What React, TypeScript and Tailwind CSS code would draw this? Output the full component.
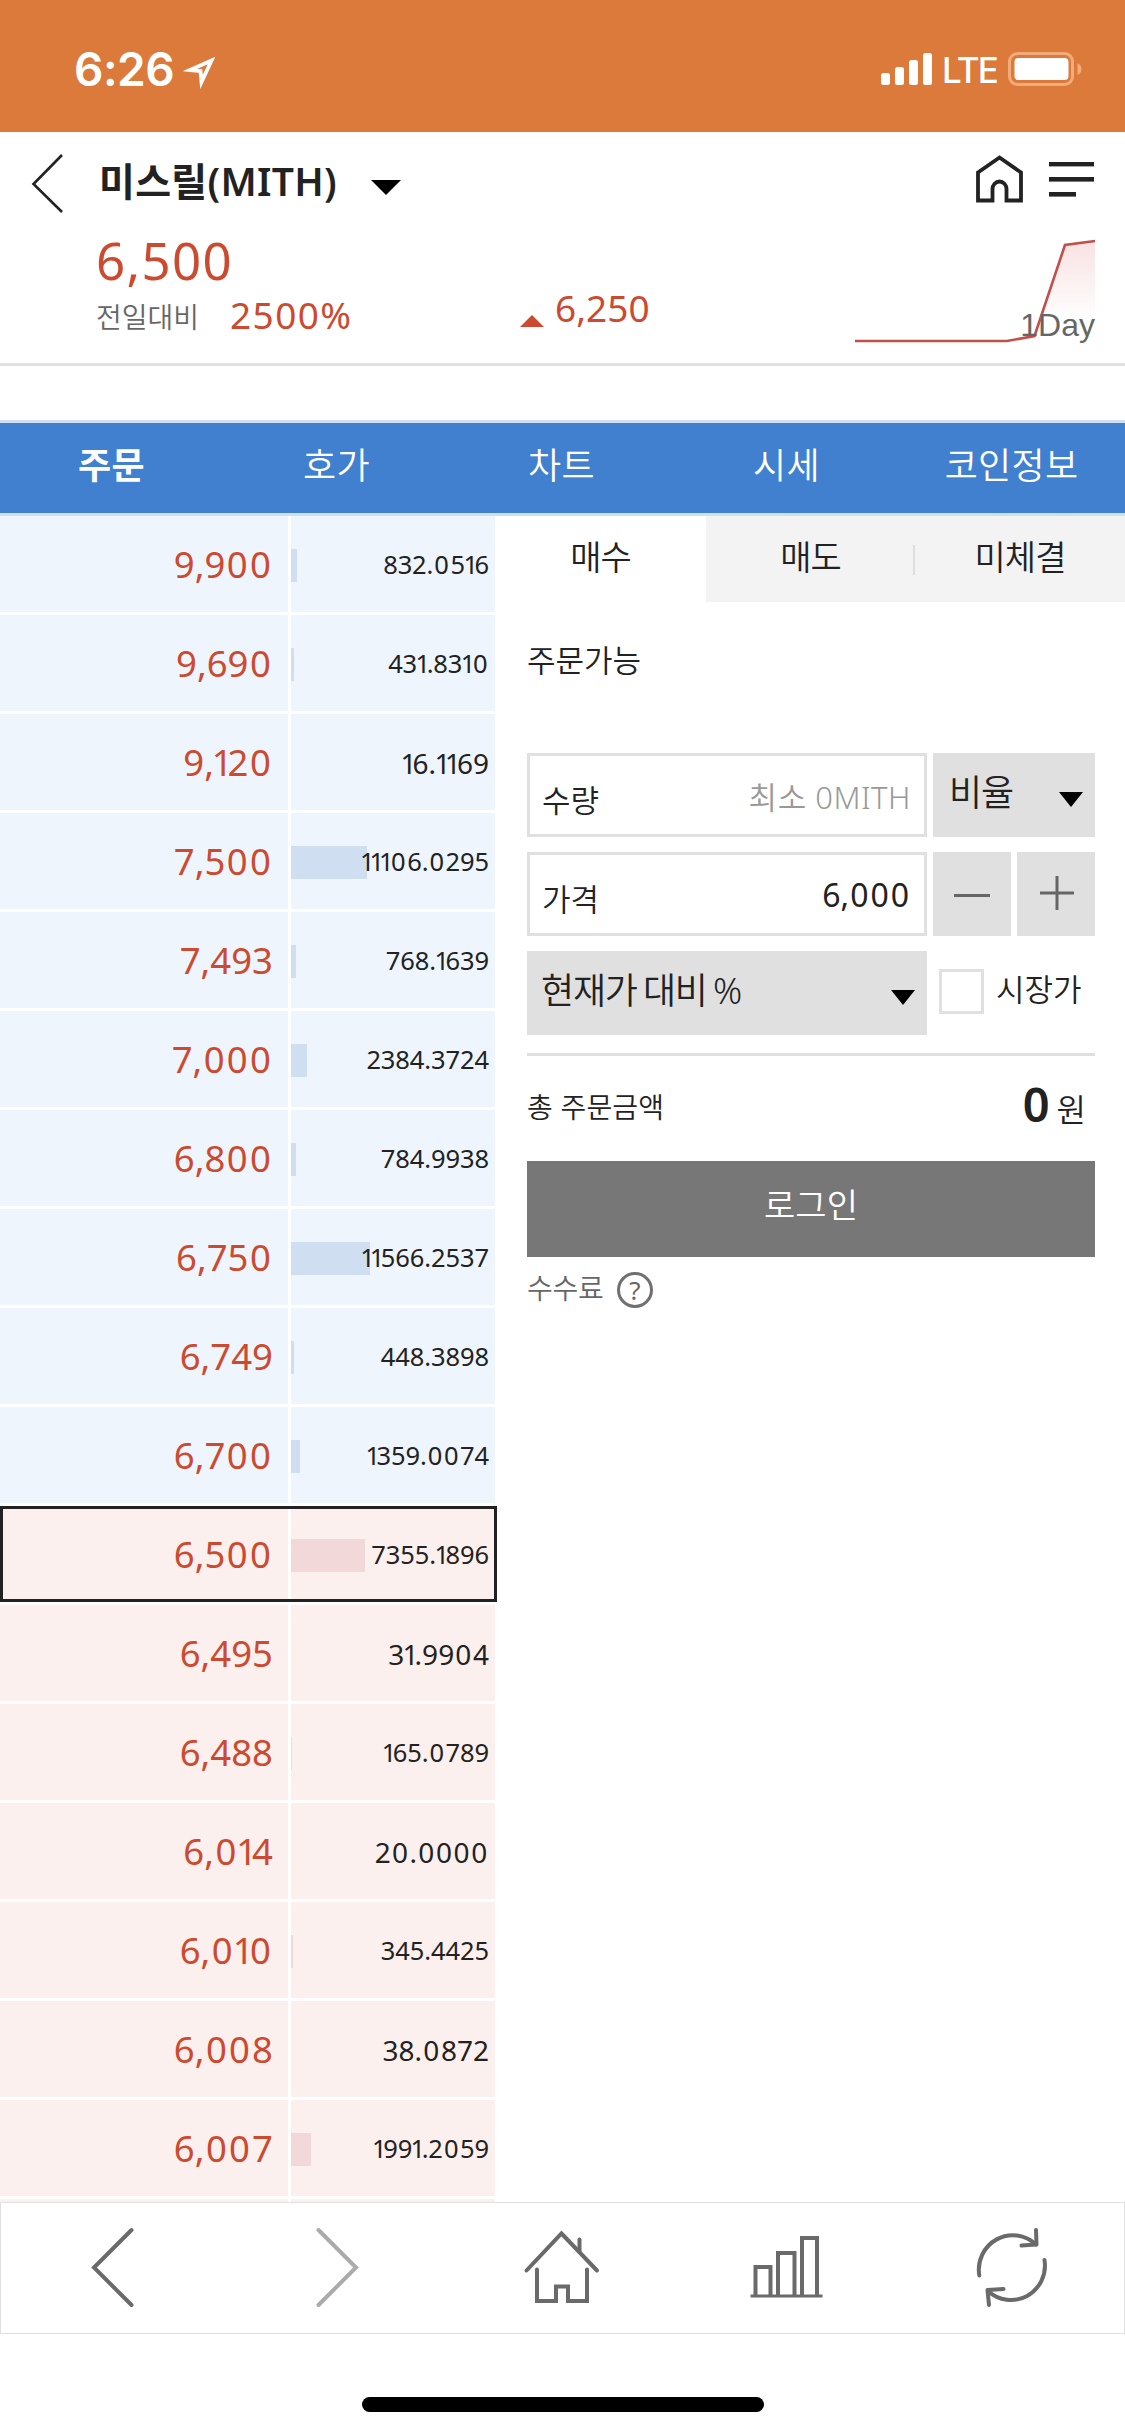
import type { ReactNode } from "react";
import clsx from "clsx";

interface OrderRow {
  price: string;
  amount: string;
  bar: number;
  side: "ask" | "bid";
  current?: boolean;
}

const ORDERS: OrderRow[] = [
  { price: "9,900", amount: "832.0516", bar: 6, side: "ask" },
  { price: "9,690", amount: "431.8310", bar: 3, side: "ask" },
  { price: "9,120", amount: "16.1169", bar: 0, side: "ask" },
  { price: "7,500", amount: "11106.0295", bar: 76, side: "ask" },
  { price: "7,493", amount: "768.1639", bar: 5, side: "ask" },
  { price: "7,000", amount: "2384.3724", bar: 16, side: "ask" },
  { price: "6,800", amount: "784.9938", bar: 5, side: "ask" },
  { price: "6,750", amount: "11566.2537", bar: 79, side: "ask" },
  { price: "6,749", amount: "448.3898", bar: 3, side: "ask" },
  { price: "6,700", amount: "1359.0074", bar: 9, side: "ask" },
  { price: "6,500", amount: "7355.1896", bar: 74, side: "bid", current: true },
  { price: "6,495", amount: "31.9904", bar: 0, side: "bid" },
  { price: "6,488", amount: "165.0789", bar: 1, side: "bid" },
  { price: "6,014", amount: "20.0000", bar: 0, side: "bid" },
  { price: "6,010", amount: "345.4425", bar: 2, side: "bid" },
  { price: "6,008", amount: "38.0872", bar: 0, side: "bid" },
  { price: "6,007", amount: "1991.2059", bar: 20, side: "bid" },
];

const NAV = ["주문", "호가", "차트", "시세", "코인정보"];

// proportional figures: narrow 1, slightly wide 0
function Figures({ value }: { value: string }) {
  return (
    <>
      {value.split(/(1|0+)/).map((part, i) => {
        if (part === "1") {
          return (
            <span key={i} className="-ml-[0.06em] tracking-[-0.14em]">
              1
            </span>
          );
        }
        if (part.startsWith("0")) {
          return (
            <span key={i} className="ml-[0.04em] tracking-[0.06em]">
              {part}
            </span>
          );
        }
        return part;
      })}
    </>
  );
}

function StatusBar() {
  return (
    <div className="flex h-[132px] items-start bg-[#db7a3a] pr-[43px] pl-[74px] text-white">
      <span className="mt-[46px] w-[108px] font-['Inter'] text-[46px] leading-[46px] font-semibold tracking-[-0.5px]">
        6:26
      </span>
      <svg className="mt-[55px] ml-[1px]" width="34" height="34" viewBox="0 0 34 34">
        <path d="M28.500 5.500 L7 15 L17.500 16 L18.500 27 Z" fill="none" stroke="#fff" strokeWidth="3.800" />
      </svg>
      <svg className="mt-[52px] ml-auto" width="52" height="34" viewBox="0 0 52 34" fill="#fff">
        <rect x="0" y="21" width="9" height="12" rx="2.5" />
        <rect x="14" y="15" width="9" height="18" rx="2.5" />
        <rect x="28" y="8" width="9" height="25" rx="2.5" />
        <rect x="42" y="1" width="9" height="32" rx="2.5" />
      </svg>
      <span className="mt-[52px] ml-[9px] w-[64px] font-['Inter'] text-[35px] leading-[36px] font-medium tracking-[-1.8px]">
        LTE
      </span>
      <svg className="mt-[51px] ml-[1px]" width="75" height="36" viewBox="0 0 75 36">
        <rect x="2.5" y="2.5" width="63" height="31" rx="8" fill="none" stroke="#f3ab79" strokeWidth="3" />
        <rect x="7.5" y="7" width="54" height="22" rx="4" fill="#fff" />
        <path d="M70.500 12 Q74.500 14 74.500 18 Q74.500 22 70.500 24 Z" fill="#f3ab79" />
      </svg>
    </div>
  );
}

function CoinHeader() {
  return (
    <header className="flex h-[234px] flex-col border-b-[3px] border-[#e0e0e0] bg-white">
      <div className="flex h-[102px] items-center pr-[31px] pl-[31px]">
        <svg width="34" height="60" viewBox="0 0 34 60" fill="none" stroke="#222" strokeWidth="2.6">
          <path d="M31 2 L2.500 31 L31 59" />
        </svg>
        <h1 className="-mt-[4px] ml-[34px] w-[240px] text-[39px] leading-[48px] font-semibold tracking-[0.3px] whitespace-nowrap text-[#222]">
          미스릴(MITH)
        </h1>
        <svg className="mt-[8px] ml-[32px]" width="30" height="15" viewBox="0 0 30 15">
          <path d="M0 0 H30 L15 15 Z" />
        </svg>
        <svg className="-mt-[8px] ml-auto" width="47" height="48" viewBox="0 0 47 48" fill="none" stroke="#222" strokeWidth="3.800">
          <path d="M2 45.500 V17.500 L23.500 2.500 L45 17.500 V45.500 H30.500 V34 A7 7.500 0 0 0 16.500 34 V45.500 Z" />
        </svg>
        <svg className="-mt-[8px] ml-[26px]" width="45" height="35" viewBox="0 0 45 35" fill="#222">
          <rect y="0" width="45" height="4.400" />
          <rect y="15" width="45" height="4.600" />
          <rect y="30" width="27" height="4.600" />
        </svg>
      </div>
      <div className="flex pr-[30px] pl-[96px] text-[#cc4a30]">
        <div className="w-[424px]">
          <p className="text-[51px] leading-[52px] font-normal tracking-[1.3px]">6,500</p>
          <div className="flex items-start">
            <span className="mt-[15px] w-[134px] text-[28px] leading-[32px] text-[#666]">전일대비</span>
            <span className="mt-[9px] text-[37px] leading-[40px] font-normal tracking-[1.4px]">2500%</span>
          </div>
        </div>
        <svg className="mt-[81px]" width="24" height="12" viewBox="0 0 24 12" fill="#cc4a30">
          <path d="M0 12 L12 0 L24 12 Z" />
        </svg>
        <span className="mt-[54px] ml-[11px] text-[37px] leading-[40px] font-normal">6,250</span>
        <div className="relative ml-auto h-[112px] w-[240px]">
          <svg width="240" height="112" viewBox="0 0 240 112">
            <defs>
              <linearGradient id="area" x1="0" y1="0" x2="0" y2="1">
                <stop offset="0" stopColor="#f8e2e2" />
                <stop offset="0.8" stopColor="#fff" />
              </linearGradient>
            </defs>
            <path d="M152 107 L179.500 102 L210 11 L240 7 V107 Z" fill="url(#area)" />
            <path d="M0 107 H152 L179.500 102 L210 11 L240 7" fill="none" stroke="#c24f4b" strokeWidth="2.600" />
          </svg>
          <span className="absolute right-0 bottom-[3px] font-['Liberation_Sans'] text-[32px] leading-[36px] font-normal text-[#666]">
            1Day
          </span>
        </div>
      </div>
    </header>
  );
}

function OrderBook() {
  return (
    <div className="flex w-[497px] shrink-0 flex-col gap-[3px] font-normal">
      {ORDERS.map((row) => (
        <div key={row.price} className="relative flex h-[96px] shrink-0 gap-[3px]">
          <div
            className={clsx(
              "flex w-[288px] items-center justify-end pr-[15px] text-[36.5px] leading-none text-[#cc4a30]",
              row.side === "ask" ? "bg-[#eef5fd]" : "bg-[#fcf0ee]"
            )}
          >
            <span>
              <Figures value={row.price} />
            </span>
          </div>
          <div
            className={clsx(
              "relative flex w-[204px] items-center justify-end pr-[6px] leading-none text-[#222]",
              row.amount.length === 7 ? "text-[28px]" : "text-[25.5px] tracking-[-0.1px]",
              row.side === "ask" ? "bg-[#eef5fd]" : "bg-[#fcf0ee]"
            )}
          >
            <div
              className={clsx(
                "absolute top-[33px] left-0 h-[33px]",
                row.side === "ask" ? "bg-[#d0def2]" : "bg-[#f2d8d8]"
              )}
              style={{ width: row.bar }}
            />
            <span className="relative mt-[2px]">
              <Figures value={row.amount} />
            </span>
          </div>
          {row.current && <div className="absolute inset-0 border-[3px] border-[#222]" />}
        </div>
      ))}
      <div className="flex h-[3px] shrink-0 gap-[3px]">
        <div className="w-[288px] bg-[#fcf0ee]" />
        <div className="w-[204px] bg-[#fcf0ee]" />
      </div>
    </div>
  );
}

function CaretDown({ className }: { className?: string }) {
  return (
    <svg className={className} width="24" height="15" viewBox="0 0 24 15">
      <path d="M0 0 H24 L12 15 Z" />
    </svg>
  );
}

function Field({ label, children }: { label: string; children: ReactNode }) {
  return (
    <div className="flex h-[84px] w-[400px] items-center justify-between border-[3px] border-[#e0e0e0] pr-[13px] pl-[12px] leading-none">
      <span className="mt-[10px] text-[31px]">{label}</span>
      {children}
    </div>
  );
}

function OrderForm() {
  return (
    <div className="flex-1 text-[#222]">
      <div className="-ml-[2px] grid h-[86px] grid-cols-[211px_209px_210px] text-center text-[34px] leading-[82px] tracking-[-1px]">
        <div>매수</div>
        <div className="relative bg-[#f3f3f3]">
          매도
          <span className="absolute top-[29px] right-0 h-[30px] w-[2px] bg-[#ddd]" />
        </div>
        <div className="bg-[#f3f3f3]">미체결</div>
      </div>
      <div className="pr-[30px] pl-[30px]">
        <p className="mt-[36px] h-[115px] text-[31px] leading-[44px]">주문가능</p>
        <div className="flex flex-col gap-[15px]">
          <div className="flex gap-[6px]">
            <Field label="수량">
              <span className="mt-[4px] text-[31px] tracking-[0.5px] text-[#999]">최소 0MITH</span>
            </Field>
            <div className="flex h-[84px] w-[162px] items-start justify-between bg-[#e0e0e0] pr-[12px] pl-[16px]">
              <span className="mt-[20px] text-[36px] leading-[40px] tracking-[-1px]">비율</span>
              <CaretDown className="mt-[39px]" />
            </div>
          </div>
          <div className="flex gap-[6px]">
            <Field label="가격">
              <span className="mt-[2px] text-[32px] font-normal">
                <Figures value="6,000" />
              </span>
            </Field>
            <button className="flex h-[84px] w-[78px] items-center justify-center bg-[#e0e0e0]">
              <svg className="mt-[3px]" width="36" height="3" viewBox="0 0 36 3">
                <rect width="36" height="3" fill="#666" />
              </svg>
            </button>
            <button className="flex h-[84px] w-[78px] items-center justify-center bg-[#e0e0e0]">
              <svg className="-mt-[3px] ml-[2px]" width="34" height="34" viewBox="0 0 34 34" fill="#666">
                <rect x="0" y="15.500" width="34" height="3" />
                <rect x="15.500" y="0" width="3" height="34" />
              </svg>
            </button>
          </div>
          <div className="flex">
            <div className="flex h-[84px] w-[400px] items-start justify-between bg-[#e0e0e0] pr-[12px] pl-[14px]">
              <span className="mt-[20px] text-[36px] leading-[40px] tracking-[-1.2px] [word-spacing:-2px] whitespace-nowrap">
                현재가 대비 %
              </span>
              <CaretDown className="mt-[39px]" />
            </div>
            <span className="mt-[18px] ml-[12px] size-[45px] border-[3px] border-[#e0e0e0] bg-white" />
            <span className="mt-[18px] ml-[12px] text-[31px] leading-[40px]">시장가</span>
          </div>
        </div>
        <div className="mt-[18px] flex h-[108px] items-start justify-between border-t-[3px] border-[#e0e0e0] pr-[9px]">
          <span className="mt-[33px] text-[28px] leading-[36px] tracking-[0.2px]">총 주문금액</span>
          <span className="flex items-start">
            <b className="mt-[24px] text-[47px] leading-[48px] font-semibold">0</b>
            <span className="mt-[36px] ml-[7px] text-[32px] leading-[36px]">원</span>
          </span>
        </div>
        <button className="block h-[96px] w-full bg-[#777] pb-[8px] text-[34px] leading-[88px] text-white">로그인</button>
        <div className="flex items-start text-[#666]">
          <span className="mt-[13px] w-[90px] text-[28px] leading-[36px] tracking-[-0.3px]">수수료</span>
          <span className="mt-[15px] flex size-[36px] items-center justify-center rounded-full border-[3px] border-[#707070] text-[26px] leading-none font-normal">
            ?
          </span>
        </div>
      </div>
    </div>
  );
}

function BrowserToolbar() {
  return (
    <div className="grid h-[132px] shrink-0 grid-cols-5 place-items-center border border-[#e0e0e0] bg-white">
      <svg width="80" height="84" viewBox="0 0 80 84" fill="none" stroke="#6a6a6a" strokeWidth="4" strokeLinecap="round">
        <path d="M58.500 4 L21 41.500 L58.500 79" />
      </svg>
      <svg width="80" height="84" viewBox="0 0 80 84" fill="none" stroke="#ababab" strokeWidth="4" strokeLinecap="round">
        <path d="M20.500 4 L58 41.500 L20.500 79" />
      </svg>
      <svg width="80" height="84" viewBox="0 0 80 84" fill="none" stroke="#6a6a6a" strokeWidth="4" strokeLinecap="round">
        <path d="M4.500 44.500 L39.500 7.500 L75 44.500" />
        <path d="M57.500 13.500 V26" />
        <path d="M15 43.500 V75 H34 V60.500 H46 V75 H65 V43.500" />
      </svg>
      <svg width="80" height="84" viewBox="0 0 80 84" fill="none" stroke="#6a6a6a" strokeWidth="4">
        <path d="M8.500 69 V41 H23.500 V69" />
        <path d="M31 69 V27 H47.500 V69" />
        <path d="M55 69 V12 H70 V69" />
        <path d="M3.500 70 H75.500" strokeWidth="3" />
      </svg>
      <svg width="80" height="84" viewBox="0 0 80 84" fill="none" stroke="#6a6a6a" strokeWidth="4" strokeLinecap="round" strokeLinejoin="round">
        <path d="M7.300 49.500 A34 34.500 0 0 1 64 18.500" />
        <path d="M64 4 L64.500 18.500 L49.500 19.500" />
        <path d="M72.500 34 A34 34.500 0 0 1 16 65" />
        <path d="M31.500 63 L15.500 64 L17 79" />
      </svg>
    </div>
  );
}

export default function App() {
  return (
    <div className="flex h-[2436px] w-[1125px] flex-col overflow-hidden bg-white font-['Noto_Sans','Noto_Sans_CJK_KR',sans-serif] font-[350]">
      <StatusBar />
      <CoinHeader />
      <nav className="mt-[54px] grid h-[96px] shrink-0 grid-cols-5 border-y-[3px] border-[#cfdff2] bg-[#4080ce] text-center text-[36px] leading-[86px] text-white">
        {NAV.map((item, i) => (
          <a key={item} className={clsx("-ml-[2px] tracking-[0.3px]", i === 0 && "font-bold")}>
            {item}
          </a>
        ))}
      </nav>
      <main className="flex h-[1686px] shrink-0 overflow-hidden">
        <OrderBook />
        <OrderForm />
      </main>
      <BrowserToolbar />
      <div className="mx-auto mt-[63px] h-[15px] w-[402px] shrink-0 rounded-full bg-black" />
    </div>
  );
}
